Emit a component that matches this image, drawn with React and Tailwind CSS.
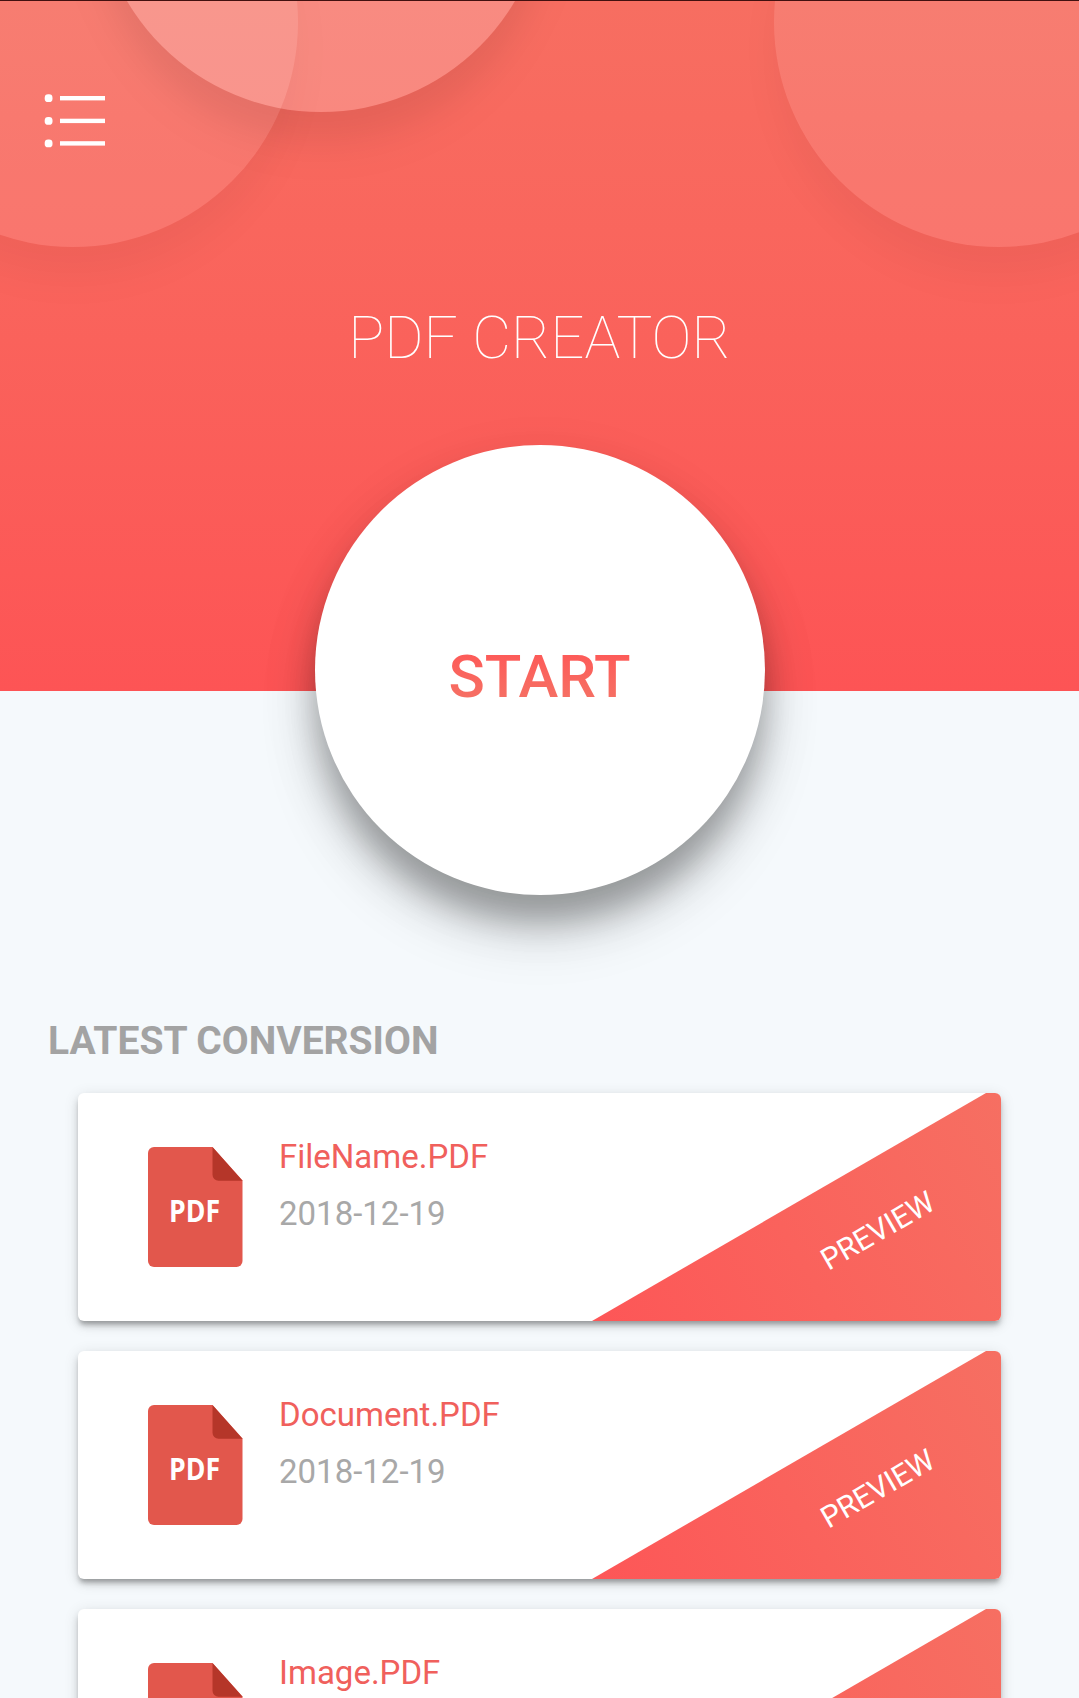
const files = [
  { name: "FileName.PDF", date: "2018-12-19" },
  { name: "Document.PDF", date: "2018-12-19" },
  { name: "Image.PDF", date: "2018-12-19" },
];

const disc =
  "size-[450px] rounded-full bg-white shadow-[0_28px_30px_-2px_rgba(0,0,0,0.25),0_38px_54px_4px_rgba(0,0,0,0.13),0_20px_60px_4px_rgba(0,0,0,0.07)]";

function MenuIcon() {
  return (
    <svg className="block h-[56px] w-[64px]" viewBox="0 0 64 56" fill="#fff">
      {[6.2, 28.9, 51.4].map((y) => (
        <g key={y}>
          <rect x="0.7" y={y - 3.9} width="7.8" height="7.8" rx="3.4" />
          <rect x="16" y={y - 2.2} width="45" height="4.4" />
        </g>
      ))}
    </svg>
  );
}

function PdfIcon() {
  return (
    <svg className="block h-[120px] w-[95px] shrink-0" viewBox="0 0 95 120">
      <path d="M6 0H64.5L94.5 33.5V114a6 6 0 0 1-6 6H6a6 6 0 0 1-6-6V6a6 6 0 0 1 6-6Z" fill="#e2574c" />
      <path d="M64.5 0L94.5 33.8H70.5a6 6 0 0 1-6-6Z" fill="#b53629" />
      <text
        x="21"
        y="75"
        textLength="51"
        lengthAdjust="spacingAndGlyphs"
        fill="#fff"
        fontFamily="'Open Sans', sans-serif"
        fontSize="31"
        fontWeight="700"
      >
        PDF
      </text>
    </svg>
  );
}

function FileCard({ name, date }) {
  return (
    <article className="relative flex h-[228px] shrink-0 rounded-[6px] bg-white pl-[70px] shadow-[0_5px_4px_-2px_rgba(0,0,0,0.22),0_5px_7px_0_rgba(0,0,0,0.14),0_3px_15px_0_rgba(0,0,0,0.12)]">
      <div className="pt-[54px]">
        <PdfIcon />
      </div>
      <div className="flex flex-col pt-[44px] pl-[36px] text-[33px] leading-[39px]">
        <h3 className="text-[#f0605c]">{name}</h3>
        <p className="mt-[18px] text-[#a8a8a8]">{date}</p>
      </div>
      <button className="absolute top-0 right-0 h-full w-[409px] overflow-hidden rounded-r-[6px] bg-linear-60 from-[#fd5657] to-[#f66f62] text-white [clip-path:polygon(0_100%,394px_0,100%_0,100%_100%)]">
        <span className="absolute top-[121px] left-[223px] block -rotate-30 text-[30px] leading-[34px]">PREVIEW</span>
      </button>
    </article>
  );
}

export default function App() {
  return (
    <div className="flex h-[1698px] w-[1079px] flex-col overflow-hidden bg-[#f5f9fc] font-['Roboto',sans-serif]">
      <header className="relative flex h-[691px] shrink-0 flex-col items-center border-t border-[#42100f] bg-linear-to-b from-[#f76e61] to-[#fd5455]">
        <div className="absolute inset-0 overflow-hidden">
          <div className={`${disc} absolute -top-[204px] -left-[152px] opacity-10`} />
          <div className={`${disc} absolute -top-[204px] left-[774px] opacity-10`} />
          <div className={`${disc} absolute -top-[339px] left-[96px] opacity-20`} />
        </div>
        <nav className="relative w-full pt-[91px] pl-[44px]">
          <MenuIcon />
        </nav>
        <h1 className="relative mt-[154px] text-[60px] leading-[72px] font-thin text-white">PDF CREATOR</h1>
        <button className={`${disc} relative mt-[71px] flex shrink-0 items-center justify-center`}>
          <span className="mt-[13px] bg-linear-to-b from-[#ff5455] to-[#f37567] bg-clip-text text-[60px] leading-[70px] font-medium text-transparent">
            START
          </span>
        </button>
      </header>
      <main className="flex flex-col pt-[327px]">
        <h2 className="pl-[48px] text-[39px] leading-[46px] font-bold text-[#a3a3a3]">LATEST CONVERSION</h2>
        <section className="flex flex-col gap-[30px] px-[78px] pt-[29px]">
          {files.map((file) => (
            <FileCard key={file.name} {...file} />
          ))}
        </section>
      </main>
    </div>
  );
}
